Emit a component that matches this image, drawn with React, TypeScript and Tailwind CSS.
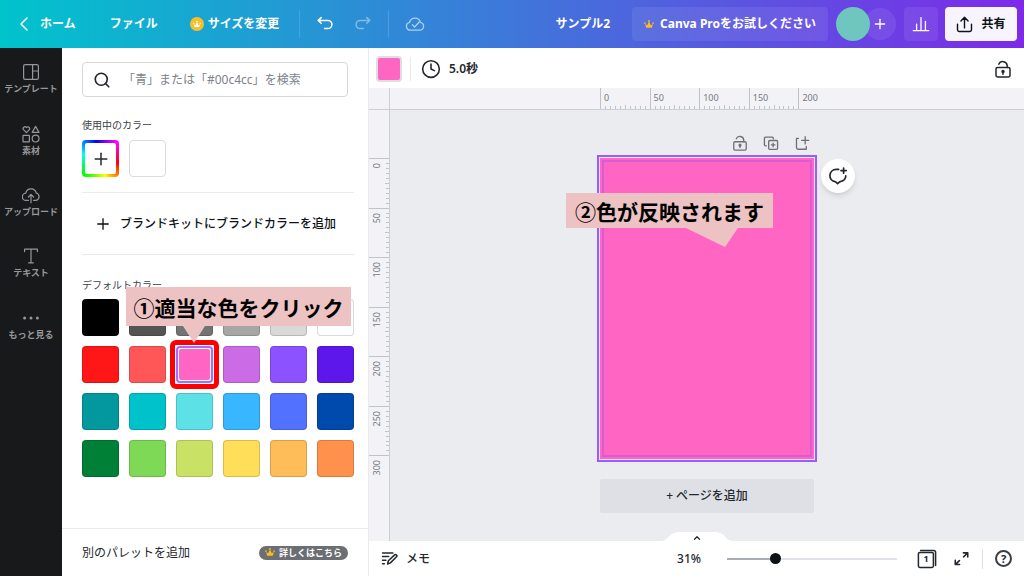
import React from 'react';
import { Search, Clock, Plus, ChevronLeft, ChevronUp } from 'lucide-react';

type IconProps = { className?: string };

const rows = [
  [
    { name: '黒', bg: 'bg-black' },
    { name: '濃いグレー', bg: 'bg-[#545454]' },
    { name: 'グレー', bg: 'bg-[#737373]' },
    { name: '灰色', bg: 'bg-[#a6a6a6]' },
    { name: '薄いグレー', bg: 'bg-[#d9d9d9]' },
    { name: '白', bg: 'bg-white' },
  ],
  [
    { name: '赤', bg: 'bg-[#ff1616]' },
    { name: 'コーラル', bg: 'bg-[#ff5757]' },
    { name: 'ピンク', bg: 'bg-[#ff66c4]', selected: true },
    { name: 'マゼンタ', bg: 'bg-[#cb6ce6]' },
    { name: '紫', bg: 'bg-[#8c52ff]' },
    { name: 'バイオレット', bg: 'bg-[#5e17eb]' },
  ],
  [
    { name: '青緑', bg: 'bg-[#03989e]' },
    { name: 'ターコイズ', bg: 'bg-[#00c2cb]' },
    { name: 'アクア', bg: 'bg-[#5ce1e6]' },
    { name: '水色', bg: 'bg-[#38b6ff]' },
    { name: '青', bg: 'bg-[#5271ff]' },
    { name: '紺', bg: 'bg-[#004aad]' },
  ],
  [
    { name: '緑', bg: 'bg-[#008037]' },
    { name: '黄緑', bg: 'bg-[#7ed957]' },
    { name: 'ライム', bg: 'bg-[#c9e265]' },
    { name: '黄', bg: 'bg-[#ffde59]' },
    { name: '山吹', bg: 'bg-[#ffbd59]' },
    { name: 'オレンジ', bg: 'bg-[#ff914d]' },
  ],
];

function Svg({ className, size = 24, width = 1.5, children }: IconProps & { size?: number; width?: number; children: React.ReactNode }) {
  return (
    <svg
      viewBox={`0 0 ${size} ${size}`}
      className={className}
      fill="none"
      stroke="currentColor"
      strokeWidth={width}
      strokeLinecap="round"
      strokeLinejoin="round"
      aria-hidden="true"
    >
      {children}
    </svg>
  );
}

function Crown({ className }: IconProps) {
  return (
    <svg viewBox="0 0 12 10" className={className} fill="currentColor" aria-hidden="true">
      <path d="M2.6 9.4 1.4 4.8 3.9 6.2 6 1.4l2.1 4.8 2.5-1.4-1.2 4.6z" />
      <circle cx="1.1" cy="3.8" r="1" />
      <circle cx="6" cy="1.2" r="1.1" />
      <circle cx="10.9" cy="3.8" r="1" />
    </svg>
  );
}

function TemplateIcon({ className }: IconProps) {
  return (
    <Svg className={className} size={18} width={1.2}>
      <rect x="1.6" y="1.6" width="14.8" height="14.8" rx="1.6" />
      <path d="M10.6 1.6v14.8M10.6 8h5.8" />
    </Svg>
  );
}

function ElementsIcon({ className }: IconProps) {
  return (
    <Svg className={className} size={18} width={1.2}>
      <path d="M4.4 7.6 1.5 4.7a1.8 1.8 0 0 1 2.9-2.2 1.8 1.8 0 0 1 2.9 2.2z" />
      <path d="M13.6 1.4 17 7.4h-6.8z" />
      <rect x="1" y="10.4" width="6.4" height="6.4" rx=".4" />
      <circle cx="13.6" cy="13.6" r="3.4" />
    </Svg>
  );
}

function UploadIcon({ className }: IconProps) {
  return (
    <Svg className={className} size={18} width={1.2}>
      <path d="M6.4 14.4H4.2a3.6 3.6 0 0 1-.4-7.2A5.3 5.3 0 0 1 14.2 7a3.8 3.8 0 0 1-.2 7.4h-2.4" />
      <path d="M9 16.8V8.6M6.4 11 9 8.4l2.6 2.6" />
    </Svg>
  );
}

function TextIcon({ className }: IconProps) {
  return (
    <Svg className={className} size={18} width={1.2}>
      <path d="M2.6 4.6V2.2h12.8v2.4M9 2.2v13.4M6.6 15.8h4.8" />
    </Svg>
  );
}

function MoreIcon({ className }: IconProps) {
  return (
    <svg viewBox="0 0 18 18" className={className} fill="currentColor" aria-hidden="true">
      <circle cx="2.6" cy="9" r="1.5" />
      <circle cx="9" cy="9" r="1.5" />
      <circle cx="15.4" cy="9" r="1.5" />
    </svg>
  );
}

function UndoIcon({ className }: IconProps) {
  return (
    <Svg className={className} size={18}>
      <path d="M5.2 2.6 2.2 5.4l3 2.8M2.4 5.4h9.4a4.1 4.1 0 0 1 0 8.2H8.6" />
    </Svg>
  );
}

function CloudCheckIcon({ className }: IconProps) {
  return (
    <Svg className={className} size={20} width={1.3}>
      <path d="M5.4 16.2a4 4 0 0 1-.8-7.9 5.6 5.6 0 0 1 10.8 0 4 4 0 0 1-.6 7.9z" />
      <path d="m7.4 10.8 2.2 2.2 4.6-5" />
    </Svg>
  );
}

function ChartIcon({ className }: IconProps) {
  return (
    <Svg className={className} size={18} width={1.3}>
      <path d="M1.2 15.6h15.6M4.6 15.4V9.2M9 15.4V2.6M13.4 15.4V6.4" />
    </Svg>
  );
}

function ShareIcon({ className }: IconProps) {
  return (
    <Svg className={className} size={18} width={1.5}>
      <path d="M1.6 8.6v6a1.8 1.8 0 0 0 1.8 1.8h11.2a1.8 1.8 0 0 0 1.8-1.8v-6M9 12.6V1.6M5.2 5.2 9 1.4l3.8 3.8" />
    </Svg>
  );
}

function UnlockIcon({ className }: IconProps) {
  return (
    <Svg className={className} size={18} width={1.5}>
      <rect x="2" y="7.6" width="14" height="9.4" rx="1.4" />
      <path d="M4.8 4.2a4.4 4.4 0 0 1 8.4 1.4v2" />
      <path d="M9 12v2.2" />
      <circle cx="9" cy="11.4" r="1" fill="currentColor" />
    </Svg>
  );
}

function CopyPageIcon({ className }: IconProps) {
  return (
    <Svg className={className} size={18} width={1.5}>
      <path d="M3.8 12.2H2.8a1.2 1.2 0 0 1-1.2-1.2V3.6a1.2 1.2 0 0 1 1.2-1.2h7.6a1.2 1.2 0 0 1 1.2 1.2v.6" />
      <rect x="6.4" y="6.2" width="10" height="10" rx="1.2" />
      <path d="M11.4 9.2v4M9.4 11.2h4" />
    </Svg>
  );
}

function AddPageIcon({ className }: IconProps) {
  return (
    <Svg className={className} size={18} width={1.5}>
      <path d="M5 3.8H2.8v10.4a1.8 1.8 0 0 0 1.8 1.8h9.2v-3.2M12.6 2v8M8.6 6h8" />
    </Svg>
  );
}

function CommentPlusIcon({ className }: IconProps) {
  return (
    <Svg className={className} size={20} width={1.7}>
      <path d="M10.6 3.4H8.4c-8.2.2-8.8 11.4-.8 12.4l2 1.9 2-1.9c4.2-.6 6.2-2.8 6.2-6M15.6 2v5.2M13 4.6h5.2" />
    </Svg>
  );
}

function NotesIcon({ className }: IconProps) {
  return (
    <Svg className={className} size={18} width={1.6}>
      <path d="M1.6 3.2h11M1.6 7h6.6M1.6 10.8h3.6M1.6 14.6h2" />
      <path d="m7 14.8.8-3.4 6.6-6.2a1.4 1.4 0 0 1 2 2l-6.4 6.4z" />
    </Svg>
  );
}

function ExpandIcon({ className }: IconProps) {
  return (
    <Svg className={className} size={18} width={1.7}>
      <path d="M11 3h4.6v4.4M15.4 3.2l-4.2 4M7 15.4H2.4V11M2.6 15.2l4.2-4" />
    </Svg>
  );
}

const navItems = [
  { icon: TemplateIcon, label: 'テンプレート' },
  { icon: ElementsIcon, label: '素材' },
  { icon: UploadIcon, label: 'アップロード' },
  { icon: TextIcon, label: 'テキスト' },
  { icon: MoreIcon, label: 'もっと見る' },
];

function Header() {
  return (
    <header className="flex h-12 shrink-0 items-center bg-[linear-gradient(90deg,#00c4cc,#7d2ae8)] pr-[7px] pl-3 text-xs font-bold text-white">
      <button className="flex items-center gap-1">
        <ChevronLeft className="size-6" strokeWidth={1.5} />
        ホーム
      </button>
      <button className="ml-[34px]">ファイル</button>
      <button className="ml-8 flex items-center gap-1">
        <span className="flex size-3.5 items-center justify-center rounded-full bg-[#fbbe28]">
          <Crown className="w-2" />
        </span>
        サイズを変更
      </button>
      <span className="ml-5 h-7 w-px bg-white/15" />
      <button className="ml-4" aria-label="元に戻す">
        <UndoIcon className="size-[18px]" />
      </button>
      <button className="ml-5 opacity-40" aria-label="やり直す">
        <UndoIcon className="size-[18px] -scale-x-100" />
      </button>
      <span className="ml-4 h-7 w-px bg-white/15" />
      <span className="ml-4 opacity-60">
        <CloudCheckIcon className="size-5" />
      </span>

      <span className="ml-auto">サンプル2</span>
      <button className="ml-[22px] flex h-[34px] items-center gap-1.5 rounded bg-white/8 px-3">
        <Crown className="w-2.5 text-[#fdbc1f]" />
        Canva Proをお試しください
      </button>
      <div className="ml-2 flex items-center">
        <span className="z-10 size-[34px] rounded-full bg-[#6fc6bf]" />
        <button className="-ml-1.5 flex size-8 items-center justify-center rounded-full bg-white/8" aria-label="メンバーを追加">
          <Plus className="size-4" strokeWidth={2} />
        </button>
      </div>
      <button className="ml-2 flex size-[34px] items-center justify-center rounded bg-white/8" aria-label="インサイト">
        <ChartIcon className="size-[18px]" />
      </button>
      <button className="ml-[7px] flex h-[34px] w-[72px] items-center justify-center gap-2 rounded bg-white/95 text-[#0e1318]">
        <ShareIcon className="size-[17px]" />
        共有
      </button>
    </header>
  );
}

function SideNav() {
  return (
    <nav className="w-[62px] shrink-0 bg-[#18191b]">
      <div className="grid h-[308px] grid-rows-5 pt-px">
        {navItems.map((item) => (
          <button key={item.label} className="flex flex-col items-center justify-center gap-px text-[#96979a]">
            <item.icon className="size-[18px]" />
            <span className="text-[9px] leading-[14px] font-bold whitespace-nowrap">{item.label}</span>
          </button>
        ))}
      </div>
    </nav>
  );
}

function ColorPanel() {
  return (
    <aside className="flex w-[307px] shrink-0 flex-col border-r border-[#e8eaee] bg-white">
      <div className="flex-1 pt-3.5 pr-3.5 pl-5">
        <label className="mr-1.5 flex h-[35px] items-center gap-3 rounded border border-[#d5d8de] px-2.5">
          <Search className="size-[18px] text-[#23282e]" strokeWidth={2.2} />
          <input
            type="search"
            aria-label="色を検索"
            placeholder="「青」または「#00c4cc」を検索"
            className="min-w-0 flex-1 text-xs outline-none placeholder:text-[#7d838a]"
          />
        </label>

        <h2 className="mt-5 text-[10px] leading-4 text-[#3c4248]">使用中のカラー</h2>
        <div className="mt-[7px] flex gap-2.5">
          <button
            className="size-[37px] rounded bg-[conic-gradient(from_45deg,#f0f,#f00,#ff0,#0f0,#0ff,#00f,#f0f)] p-[3px]"
            aria-label="新しいカラーを追加"
          >
            <span className="flex size-full items-center justify-center rounded-xs bg-white">
              <Plus className="size-5 text-[#23282e]" strokeWidth={1.8} />
            </span>
          </button>
          <button className="size-[37px] rounded border border-[#d9dbe0] bg-white" aria-label="白" />
        </div>

        <div className="mt-[15px] border-y border-[#e8eaed]">
          <button className="flex h-[61px] w-full items-center gap-2 pl-3 text-xs font-medium text-[#0e1318]">
            <Plus className="size-[18px]" strokeWidth={1.8} />
            ブランドキットにブランドカラーを追加
          </button>
        </div>

        <h2 className="mt-[22px] text-[10px] leading-4 text-[#3c4248]">デフォルトカラー</h2>
        <div className="relative mt-1.5">
          <div className="grid w-fit grid-cols-6 gap-2.5">
            {rows.flat().map((color) =>
              color.selected ? (
                <div key={color.name} className="relative size-[37px]">
                  <button className="size-full rounded border-2 border-[#a66bff] bg-white p-px" aria-label={color.name} aria-pressed="true">
                    <span className={`block size-full rounded-xs ${color.bg}`} />
                  </button>
                  <span className="pointer-events-none absolute -inset-1.5 rounded-md border-[5px] border-[#ff0000]" />
                </div>
              ) : (
                <button key={color.name} className={`size-[37px] rounded border border-black/15 ${color.bg}`} aria-label={color.name} />
              ),
            )}
          </div>
          <div className="absolute -top-3 left-11">
            <p className="flex h-[39px] w-[225px] items-center justify-center bg-[#ecc2c2] pt-1 text-[21px] font-bold whitespace-nowrap text-black">
              ①適当な色をクリック
            </p>
            <svg viewBox="0 0 24 17" className="ml-14 h-[17px] w-6 fill-[#ecc2c2]" aria-hidden="true">
              <path d="M1 0h22L12 17z" />
            </svg>
          </div>
        </div>
      </div>

      <div className="flex h-12 items-center justify-between border-t border-[#e8eaee] pr-5 pl-5">
        <button className="text-xs text-[#23282e]">別のパレットを追加</button>
        <a href="#pro" className="flex h-3.5 items-center rounded-full bg-[#6b6e73] px-1.5 text-[9px] font-bold text-white">
          <Crown className="mr-1 w-2.5 text-[#fdbc1f]" />
          詳しくはこちら
        </a>
      </div>
    </aside>
  );
}

function Toolbar() {
  return (
    <div className="flex h-10 shrink-0 items-center bg-white pt-0.5 pr-3 pl-[7px] text-[#23282e]">
      <button className="size-[26px] rounded bg-[#dcdee3] p-0.5" aria-label="背景色">
        <span className="block size-full rounded-xs bg-[#ff66c4]" />
      </button>
      <span className="ml-2 h-6 w-px bg-[#e8eaee]" />
      <button className="ml-2.5 flex items-center gap-2 text-xs font-semibold">
        <Clock className="size-5" strokeWidth={1.9} />
        5.0秒
      </button>
      <button className="ml-auto" aria-label="ロック">
        <UnlockIcon className="size-[18px]" />
      </button>
    </div>
  );
}

const minorTicks = Array.from({ length: 9 }, (_, i) => i);

function HorizontalRuler() {
  return (
    <div className="flex h-[22px] shrink-0 border-b border-[#cbced4] bg-[#f3f3f7]">
      <span className="w-[21px] shrink-0 border-r border-[#cbced4]" />
      <div className="flex flex-1 justify-center overflow-hidden">
        <div className="w-[214px]">
          <div className="grid h-full w-[248px] grid-cols-5 text-[9px] leading-3 text-[#75797f]">
            {[0, 50, 100, 150, 200].map((mark) => (
              <div key={mark} className="flex flex-col justify-between border-l border-[#c0c3c9] pt-1">
                <span className="pl-[3px]">{mark}</span>
                {mark < 200 && (
                  <span className="flex h-1 items-end justify-evenly">
                    {minorTicks.map((i) => (
                      <i key={i} className="h-[3px] w-px bg-[#c0c3c9] nth-5:h-1" />
                    ))}
                  </span>
                )}
              </div>
            ))}
          </div>
        </div>
      </div>
    </div>
  );
}

function VerticalRuler() {
  return (
    <div className="w-[21px] shrink-0 border-r border-[#cbced4] bg-[#f3f3f7] pt-12">
      <div className="grid h-[347px] grid-rows-7 text-[9px] leading-3 text-[#75797f]">
        {[0, 50, 100, 150, 200, 250, 300].map((mark) => (
          <div key={mark} className="flex justify-between border-t border-[#c0c3c9] pl-0.5">
            <span className="rotate-180 self-start pb-1 [writing-mode:vertical-rl]">{mark}</span>
            {mark < 300 && (
              <span className="flex w-1 flex-col items-end justify-evenly">
                {minorTicks.map((i) => (
                  <i key={i} className="h-px w-[3px] bg-[#c0c3c9] nth-5:w-1" />
                ))}
              </span>
            )}
          </div>
        ))}
      </div>
    </div>
  );
}

function Workspace() {
  return (
    <div className="flex flex-1">
      <VerticalRuler />
      <div className="flex flex-1 flex-col items-center bg-[#ebecf0] pt-[25px] pb-7">
        <div className="flex w-[220px] items-center justify-end gap-[15px] pr-[7px] text-[#6d7177]">
          <button aria-label="ページをロック">
            <UnlockIcon className="size-4" />
          </button>
          <button aria-label="ページを複製">
            <CopyPageIcon className="size-4" />
          </button>
          <button aria-label="ページを挿入">
            <AddPageIcon className="size-4" />
          </button>
        </div>

        <div className="relative mt-1 h-[307px] w-[220px] border-2 border-[#9b5cff] bg-[#f1e4fb] p-px">
          <div className="size-full bg-[#ff66c4] p-0.5">
            <div className="size-full border-2 border-[#d95bd6]" />
          </div>
          <button
            className="absolute top-0.5 left-full ml-1.5 flex size-[34px] items-center justify-center rounded-full bg-white text-[#23282e] shadow-md"
            aria-label="コメントを追加"
          >
            <CommentPlusIcon className="size-5" />
          </button>
          <div className="absolute top-9 -left-[33px]">
            <p className="flex h-[35px] w-[207px] items-center justify-center bg-[#ecc2c2] pt-1 text-[21px] font-bold whitespace-nowrap text-black">
              ②色が反映されます
            </p>
            <svg viewBox="0 0 52 19" className="ml-[120px] h-[19px] w-[52px] fill-[#ecc2c2]" aria-hidden="true">
              <path d="M0 0h52L39 19z" />
            </svg>
          </div>
        </div>

        <button className="mt-[17px] h-[34px] w-[214px] rounded-xs bg-[#dfe0e5] text-xs font-medium text-[#23282e]">+ ページを追加</button>
      </div>
    </div>
  );
}

function Footer() {
  return (
    <footer className="relative flex h-[35px] shrink-0 items-center bg-white pr-3 pl-3 text-xs text-[#23282e]">
      <button className="absolute -top-2.5 left-1/2 flex h-3 w-[70px] -translate-x-1/2 justify-center" aria-label="ページ一覧を表示">
        <svg viewBox="0 0 70 12" className="absolute inset-0 fill-white" aria-hidden="true">
          <path d="M0 10c6 0 7-9 17-9h36c10 0 11 9 17 9v2H0z" />
        </svg>
        <ChevronUp className="relative mt-0.5 size-2.5" strokeWidth={3} />
      </button>
      <button className="flex items-center gap-2 font-medium">
        <NotesIcon className="size-[17px]" />
        メモ
      </button>
      <button className="ml-auto font-medium">31%</button>
      <input
        type="range"
        aria-label="ズーム"
        defaultValue={27}
        className="ml-[26px] h-3 w-[170px] appearance-none bg-[linear-gradient(90deg,#a9adb4_28%,#dfe2e8_28%)] bg-[length:100%_2px] bg-center bg-no-repeat [&::-webkit-slider-thumb]:size-[11px] [&::-webkit-slider-thumb]:appearance-none [&::-webkit-slider-thumb]:rounded-full [&::-webkit-slider-thumb]:bg-[#0e1318]"
      />
      <button className="ml-5 flex size-5 items-center justify-center" aria-label="ページ数 1">
        <span className="relative flex size-full items-center justify-center">
          <Svg className="absolute inset-0 size-5" size={20} width={1.5}>
            <rect x="1.4" y="3.4" width="15" height="15" rx="1.4" />
            <path d="M3.6 1.4h13a2 2 0 0 1 2 2v13" />
          </Svg>
          <span className="pr-0.5 text-[9px] leading-3 font-bold">1</span>
        </span>
      </button>
      <button className="ml-4" aria-label="全画面表示">
        <ExpandIcon className="size-[17px]" />
      </button>
      <span className="ml-3 h-5 w-px bg-[#dfe2e8]" />
      <button className="ml-3 flex size-[17px] items-center justify-center rounded-full border-2 border-[#3a3f45] text-[11px] leading-3 font-bold" aria-label="ヘルプ">
        ?
      </button>
    </footer>
  );
}

export default function App() {
  return (
    <div className="flex min-h-screen flex-col font-['Noto_Sans','Noto_Sans_CJK_JP',sans-serif]">
      <Header />
      <div className="flex flex-1">
        <SideNav />
        <ColorPanel />
        <main className="flex min-w-0 flex-1 flex-col">
          <Toolbar />
          <HorizontalRuler />
          <Workspace />
          <Footer />
        </main>
      </div>
    </div>
  );
}
